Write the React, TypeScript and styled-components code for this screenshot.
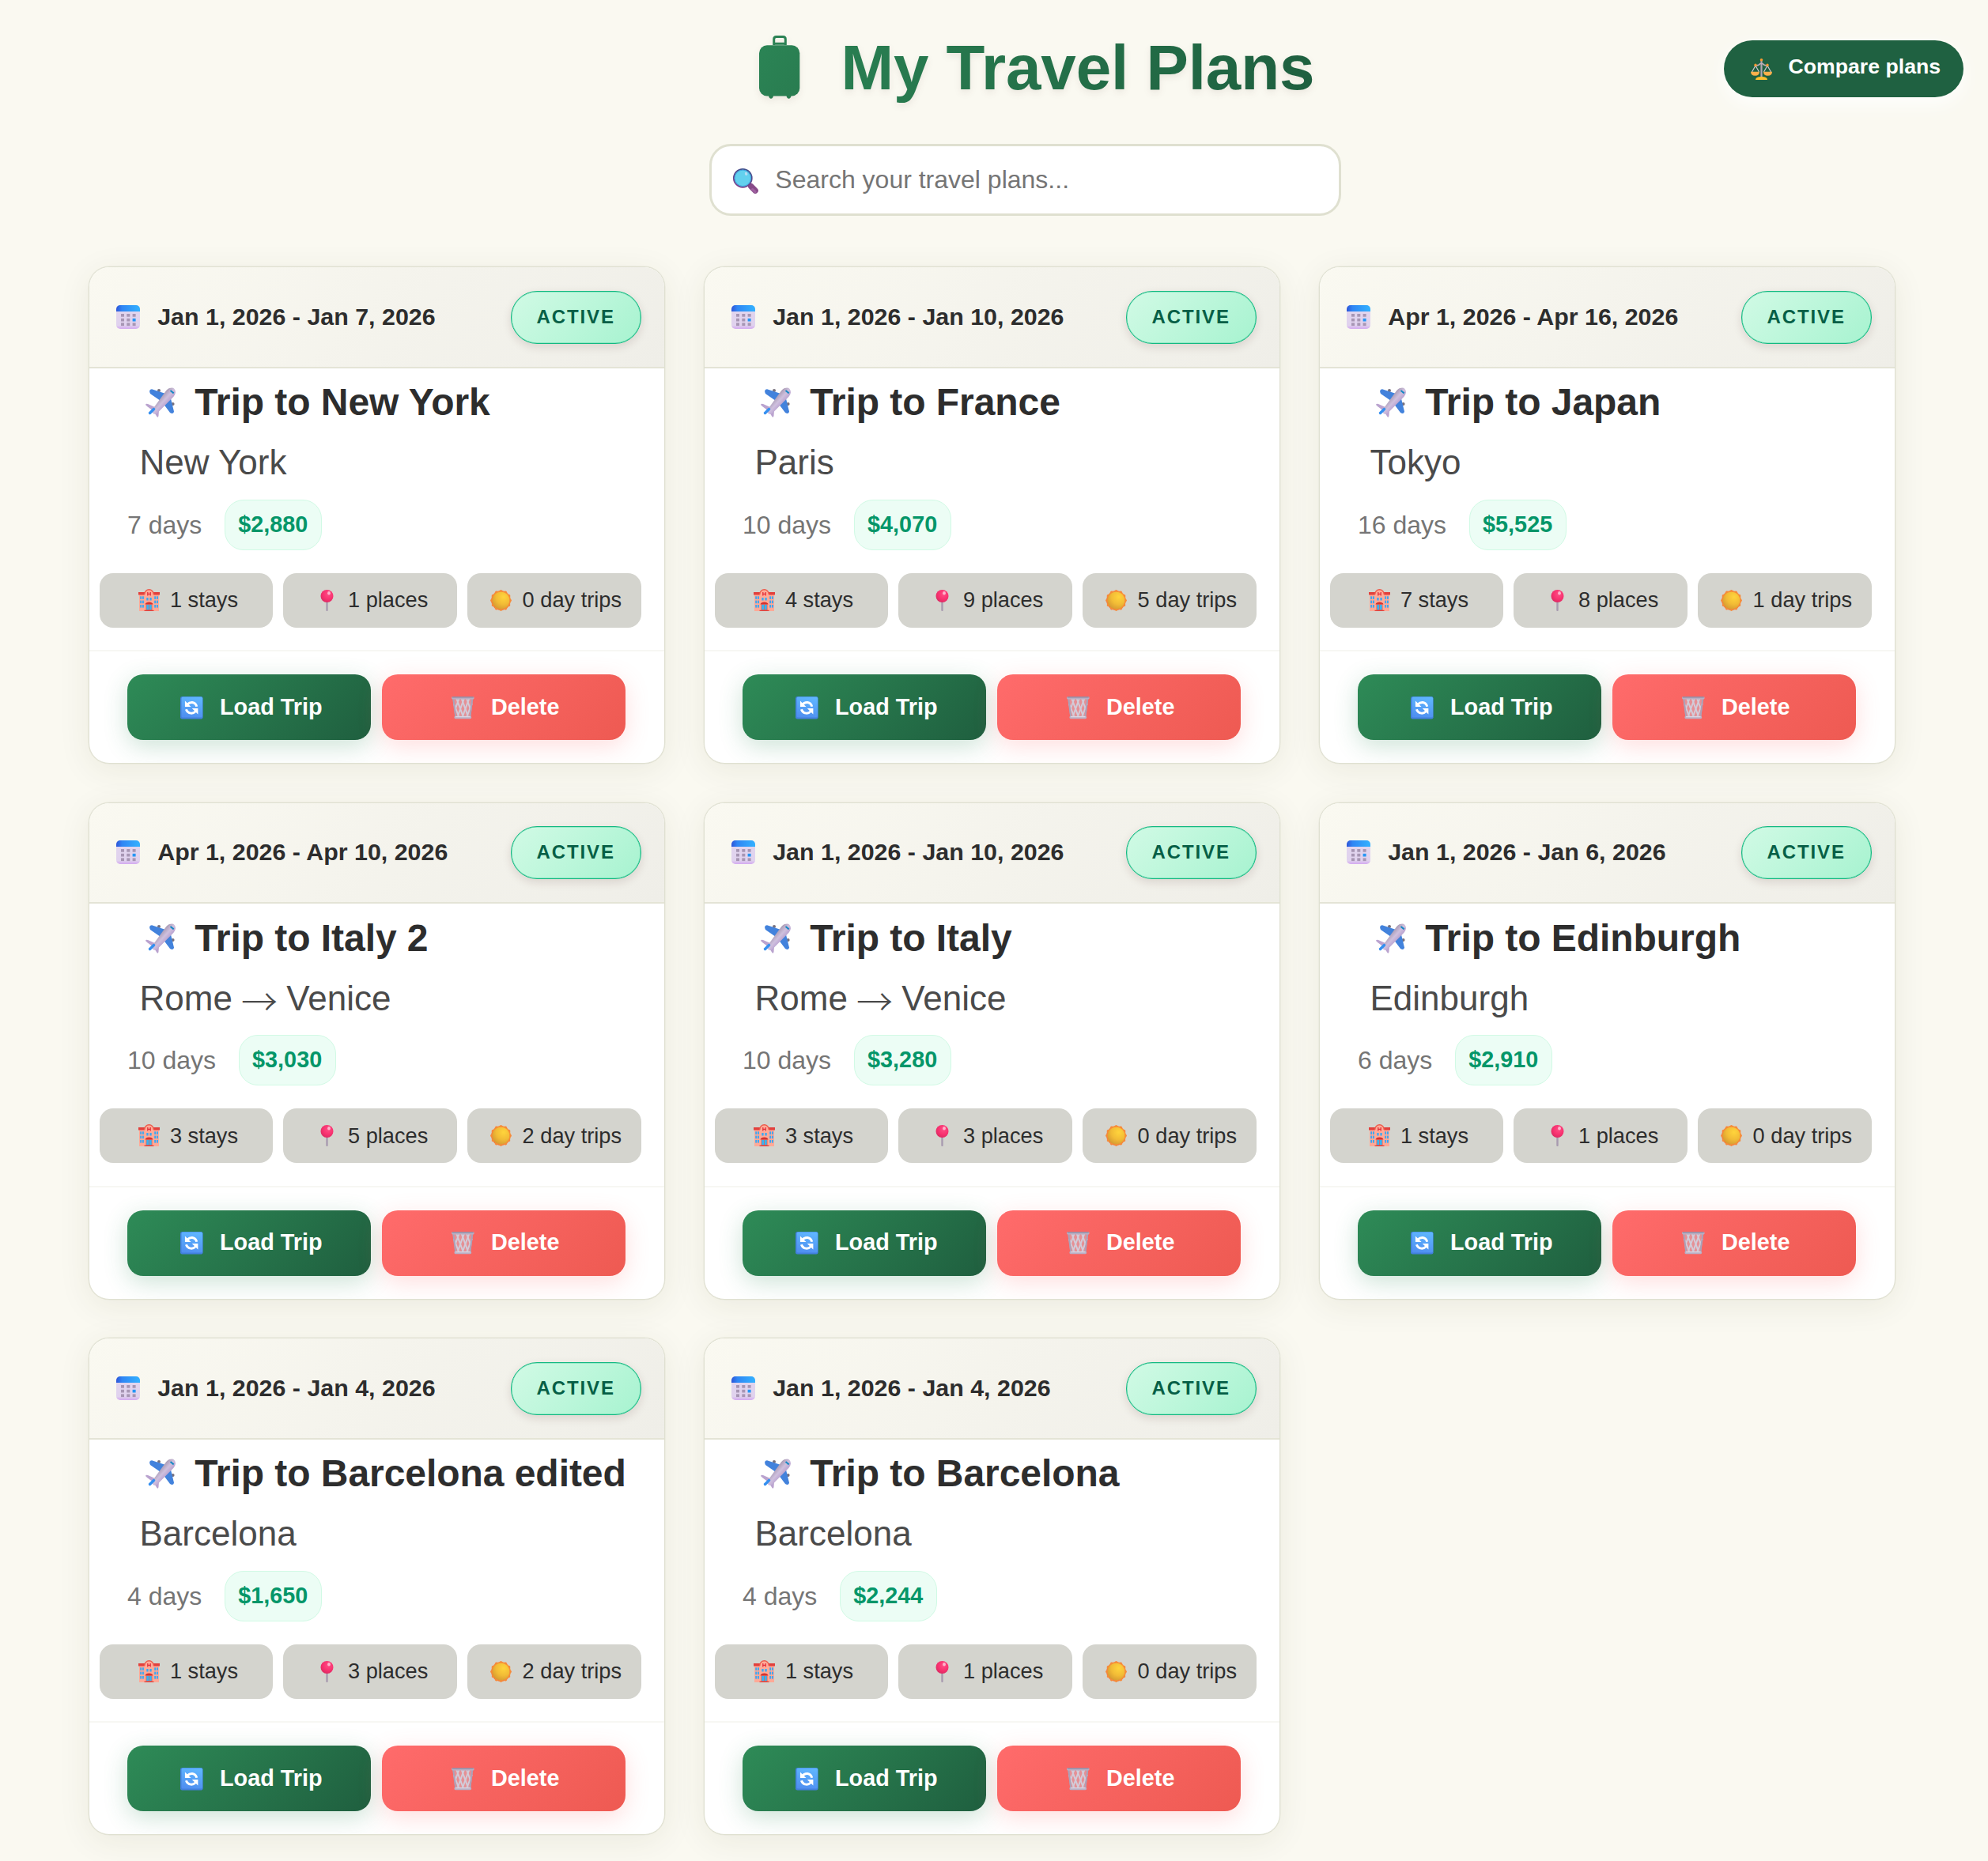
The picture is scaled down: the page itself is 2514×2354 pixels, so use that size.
import React from "react";
import styled, { createGlobalStyle } from "styled-components";

const GlobalStyle = createGlobalStyle`
  * { box-sizing: border-box; }
  body {
    margin: 0;
    background: #faf9f1;
    font-family: Arial, "Liberation Sans", sans-serif;
    color: #2d2d2d;
  }
  h1, h2, p { margin: 0; }
  button, input { font-family: inherit; }
`;

const Page = styled.div`
  min-height: 2354px;
  padding-bottom: 34px;
`;

const Header = styled.header`
  display: grid;
  grid-template-columns: 931px auto 1fr;
  align-items: center;
  height: 131px;
  padding: 39px 31px 0 0;
`;

const PageTitle = styled.h1`
  display: flex;
  align-items: center;
  grid-column: 2;
  gap: 23.5px;
  height: 92px;
  font-size: 80px;
  line-height: 92px;
  letter-spacing: -0.1px;
  white-space: nowrap;
  filter: drop-shadow(0 4px 4px rgba(60, 30, 20, 0.08));
`;

const TitleText = styled.span`
  padding-top: 1px;
  background: linear-gradient(100deg, #297e51 0%, #1e5f3f 100%);
  background-clip: text;
  -webkit-background-clip: text;
  color: transparent;
`;

const CompareButton = styled.button`
  display: flex;
  align-items: center;
  justify-self: end;
  gap: 16px;
  height: 72px;
  width: 303px;
  margin-top: 4px;
  padding: 0 0 0 29px;
  border: 0;
  border-radius: 36px;
  background: #1f6141;
  color: #fff;
  font-size: 26.67px;
  font-weight: 700;
  line-height: 32px;
  white-space: nowrap;
  box-shadow: 0 8px 24px rgba(255, 255, 255, 0.9);

  span { margin-top: -6px; }
`;

const SearchArea = styled.div`
  display: flex;
  justify-content: center;
  padding: 51px 0 64px 79px;
`;

const SearchBox = styled.label`
  display: flex;
  align-items: center;
  gap: 15.5px;
  width: 799px;
  height: 91px;
  padding-left: 21px;
  border: 3px solid #dfe0d0;
  border-radius: 27px;
  background: #fff;
`;

const SearchInput = styled.input`
  flex: 1;
  min-width: 0;
  height: 60px;
  padding: 0;
  border: 0;
  outline: 0;
  background: transparent;
  font-size: 32px;

  &::placeholder { color: #757575; opacity: 1; }
`;

const CardGrid = styled.main`
  display: grid;
  grid-template-columns: repeat(3, 1fr);
  gap: 48.5px 49px;
  padding: 0 117px 0 112px;
`;

const Card = styled.article`
  display: flex;
  flex-direction: column;
  height: 629px;
  overflow: hidden;
  border: 1px solid #dfe0d1;
  border-radius: 26px;
  background: #fff;
  box-shadow: 0 0 0 0.5px rgba(223, 224, 209, 0.6), 0 8px 40px rgba(70, 70, 30, 0.08);
`;

const CardHeader = styled.div`
  display: flex;
  align-items: center;
  flex: none;
  height: 127.5px;
  padding: 0 29.5px 0 28px;
  border-bottom: 2px solid #e4e4d6;
  background: linear-gradient(135deg, #faf9f1 0%, #efeee8 100%);
`;

const Dates = styled.div`
  display: flex;
  align-items: center;
  gap: 16.6px;
  flex: 1;
  font-size: 30.4px;
  font-weight: 700;
  line-height: 34px;
  white-space: nowrap;

  span { margin-top: -2px; }
`;

const Status = styled.span`
  width: 165px;
  height: 67px;
  margin-top: 1px;
  padding-left: 32px;
  border: 1px solid #12b981;
  border-radius: 33px;
  background: linear-gradient(135deg, #d1fae5 0%, #a7f3d0 100%);
  color: #065f46;
  font-size: 24px;
  font-weight: 700;
  letter-spacing: 1.9px;
  line-height: 64px;
  box-shadow: inset 0 0 0 0.5px rgba(18, 185, 129, 0.5), 0 4px 12px rgba(60, 20, 20, 0.13);
`;

const TripTitle = styled.h2`
  display: flex;
  align-items: center;
  gap: 16.6px;
  height: 56px;
  margin: 15.5px 0 0 64px;
  font-size: 48px;
  line-height: 56px;
  letter-spacing: -0.05px;
  white-space: nowrap;
`;

const Route = styled.p`
  height: 56px;
  margin: 20px 0 0 63.5px;
  color: #4a4a4a;
  font-size: 44px;
  line-height: 56px;
  white-space: nowrap;
`;

const Arrow = styled.span`
  display: inline-block;
  width: 44px;
  font-family: "Noto Sans CJK JP", sans-serif;
  font-size: 46px;
  font-weight: 300;
  line-height: 0;
  text-indent: -1px;
  vertical-align: -6px;
`;

const Meta = styled.div`
  display: flex;
  align-items: center;
  gap: 28.5px;
  height: 64px;
  margin: 18.5px 0 29px 48px;
`;

const Duration = styled.span`
  color: #757575;
  font-size: 32px;
  line-height: 36px;
`;

const Price = styled.span`
  height: 64px;
  padding: 0 16.5px;
  border: 1.5px solid #d1fae5;
  border-radius: 24px;
  background: #ecfdf5;
  color: #059669;
  font-size: 28.8px;
  font-weight: 700;
  line-height: 61px;
`;

const Stats = styled.div`
  display: grid;
  grid-template-columns: repeat(3, 1fr);
  gap: 13px;
  margin: 0 29.5px 28.5px 12.5px;
`;

const Stat = styled.div`
  display: flex;
  align-items: center;
  justify-content: center;
  gap: 8px;
  height: 69px;
  border-radius: 17px;
  background: #d4d4ce;
  font-size: 27.2px;
  line-height: 32px;
  white-space: nowrap;
`;

const Actions = styled.div`
  display: grid;
  grid-template-columns: 1fr 1fr;
  gap: 13.5px;
  padding: 29px 49.5px 28px 48px;
  border-top: 2px solid #f7f7f3;
`;

const ActionButton = styled.button<{ $danger?: boolean }>`
  display: flex;
  align-items: center;
  justify-content: center;
  gap: 16px;
  height: 83px;
  padding: 0;
  border: 0;
  border-radius: 20px;
  background: ${(p) =>
    p.$danger
      ? "linear-gradient(135deg, #ff6b6b 0%, #ee5a52 100%)"
      : "linear-gradient(135deg, #2e8b57 0%, #1f5f3f 100%)"};
  box-shadow: 0 8px 30px
    ${(p) => (p.$danger ? "rgba(255, 107, 107, 0.22)" : "rgba(46, 139, 87, 0.24)")};
  color: #fff;
  font-size: 28.8px;
  font-weight: 700;
  line-height: 34px;
  white-space: nowrap;

  span { margin-top: -2px; }
`;

/* Holds a pictogram inside the wide advance an emoji glyph takes. */
const IconSlot = styled.i<{ $width: number; $size: number; $drop?: number }>`
  display: flex;
  align-items: center;
  justify-content: center;
  flex: none;
  width: ${(p) => p.$width}px;
  padding-top: ${(p) => p.$drop ?? 0}px;

  svg {
    display: block;
    width: ${(p) => p.$size}px;
    height: ${(p) => p.$size}px;
    overflow: visible;
  }
`;

const SuitcaseIcon = styled.svg`
  display: block;
  flex: none;
  width: 109px;
  height: 80px;
`;

const Suitcase = () => (
  <SuitcaseIcon viewBox="0 0 109 80">
    <defs>
      <linearGradient id="case" x1="0" y1="0" x2="1" y2="1">
        <stop offset="0" stopColor="#2b8455" />
        <stop offset="1" stopColor="#297c50" />
      </linearGradient>
    </defs>
    <path d="M47.7 12V4.6q0-3 3-3h8.6q3 0 3 3V12M47.7 10.2h14.6" fill="none" stroke="#2b8254" strokeWidth="3" />
    <rect x="29" y="12.3" width="51.3" height="64.2" rx="10" fill="url(#case)" />
    <path d="M41 76h6q-.6 3.8-3 3.8T41 76zM63.5 76h6q-.6 3.8-3 3.8t-3-3.8z" fill="#297c50" />
  </SuitcaseIcon>
);

const Calendar = () => (
  <svg viewBox="0 0 30 30">
    <defs>
      <linearGradient id="calTop" x1="0" y1="0" x2="1" y2="0">
        <stop offset="0" stopColor="#2f55d8" />
        <stop offset=".25" stopColor="#2f86f4" />
        <stop offset="1" stopColor="#33b2ff" />
      </linearGradient>
      <linearGradient id="calBody" x1="0" y1="0" x2="0" y2="1">
        <stop offset="0" stopColor="#e2d6ee" />
        <stop offset=".85" stopColor="#e0d2ee" />
        <stop offset="1" stopColor="#d3a9f0" />
      </linearGradient>
    </defs>
    <rect width="30" height="30" rx="5" fill="url(#calBody)" />
    <path d="M0 8V5a5 5 0 0 1 5-5h20a5 5 0 0 1 5 5v3z" fill="url(#calTop)" />
    <g fill="#a796b4">
      {[11, 16.8, 22.4].map((y) =>
        [6, 13.3, 20.6].map((x) => (
          <rect key={`${x}-${y}`} x={x} y={y} width="4" height="3.7" fill={x > 20 && y > 16 && y < 20 ? "#2596f5" : undefined} />
        ))
      )}
    </g>
  </svg>
);

const Plane = () => (
  <svg viewBox="0 0 38 38">
    <defs>
      <linearGradient id="hull" x1="0.35" y1="0.35" x2="0.65" y2="0.65">
        <stop offset="0" stopColor="#a99bb4" />
        <stop offset=".5" stopColor="#cfc0de" />
        <stop offset="1" stopColor="#b79fce" />
      </linearGradient>
    </defs>
    <circle cx="17" cy="4" r="2" fill="#77717d" />
    <circle cx="34.6" cy="21" r="2" fill="#77717d" />
    <path d="M6 8Q3.500 2.800 8 2.300L27 8.500 19 17z" fill="#4282dc" />
    <path d="M31 32Q35.500 34.500 36 30.500L31 10 22 20z" fill="#4282dc" />
    <path d="M0 22q.5-2 3-1l9 4 2 4 3 0-.5 7q-.5 2.500-2 1.300L10 30l-8-6z" fill="#baa3cf" />
    <path d="M30 1q7.500-2.500 8 5.200-.5 3.500-2.500 5.500L15 32.500q-3.500 2.300-5.700.2t.2-5.700L26 4.200q2-2.300 4-3.200z" fill="url(#hull)" />
    <path d="M5.500 32.500l5-5" stroke="#348ff0" strokeWidth="3.4" strokeLinecap="round" />
    <path d="M31.500 4l4.200 3.400" stroke="#1689c4" strokeWidth="2" />
  </svg>
);

const Hotel = () => (
  <svg viewBox="0 0 27 27">
    <path d="M1 4h25v23H1z" fill="#ffa997" />
    <path d="M0 3h27v3.5H0z" fill="#e2403c" />
    <path d="M7.8 27V5.5a5.7 5.7 0 0 1 11.4 0V27z" fill="#ffab98" />
    <path d="M7.8 6V5.5a5.7 5.7 0 0 1 11.4 0V6" fill="none" stroke="#ed5b4c" strokeWidth="1.4" />
    <path d="M11.8 3v4.5M15.2 3v4.5M11.8 5.3h3.4" stroke="#e2303c" strokeWidth="1.3" />
    <g fill="#38a8f4">
      {[8.3, 13.6, 19].map((y) =>
        [2.2, 5, 20.2, 23].map((x) => <rect key={`${x}-${y}`} x={x} y={y} width="1.9" height="3.6" />)
      )}
      <path d="M10.3 10h2.3v3.5h-2.3zM14.4 10h2.3v3.5h-2.3z" />
    </g>
    <path d="M9.5 18.5h8V26h-8z" fill="#e8604f" />
    <path d="M10.3 18.7h2.8v6.6h-2.8zM13.9 18.7h2.8v6.6h-2.8z" fill="#35b4f5" />
    <path d="M8.5 18.6q.6-3.2 5-3.2t5 3.2z" fill="#d6332f" />
    <path d="M7.5 25.7h12V27h-12z" fill="#e2403c" />
  </svg>
);

const Pin = () => (
  <svg viewBox="0 0 27 27">
    <defs>
      <radialGradient id="pinHead" cx=".6" cy=".35" r=".7">
        <stop offset="0" stopColor="#ff4d85" />
        <stop offset=".6" stopColor="#f7316f" />
        <stop offset="1" stopColor="#d92a61" />
      </radialGradient>
    </defs>
    <rect x="12.3" y="14" width="2.4" height="13" rx="1" fill="#a89bb0" />
    <circle cx="13.5" cy="8" r="8" fill="url(#pinHead)" />
    <ellipse cx="16" cy="4.3" rx="1.9" ry="2.3" fill="#ffb3cb" />
  </svg>
);

const Sun = () => (
  <svg viewBox="0 0 27 27">
    <defs>
      <radialGradient id="sunFace" cx=".65" cy=".3" r=".85">
        <stop offset="0" stopColor="#ffd43c" />
        <stop offset=".5" stopColor="#f2bc36" />
        <stop offset="1" stopColor="#cf9230" />
      </radialGradient>
      <linearGradient id="sunRim" x1="1" y1="0" x2="0" y2="1">
        <stop offset="0" stopColor="#ffa234" />
        <stop offset="1" stopColor="#ec7340" />
      </linearGradient>
    </defs>
    <circle cx="13.5" cy="13.5" r="12.4" fill="url(#sunRim)" />
    <g fill="#f68a3a">
      {Array.from({ length: 12 }, (_, i) => (
        <path key={i} d="M10.7 3q1-3 2.8-3t2.8 3z" transform={`rotate(${i * 30} 13.5 13.5)`} />
      ))}
    </g>
    <circle cx="13.5" cy="13.5" r="10.8" fill="url(#sunFace)" />
  </svg>
);

const Refresh = () => (
  <svg viewBox="0 0 29 29">
    <defs>
      <linearGradient id="tile" x1="0.6" y1="0" x2="0.4" y2="1">
        <stop offset="0" stopColor="#5fb6ff" />
        <stop offset="1" stopColor="#4f8ff0" />
      </linearGradient>
    </defs>
    <rect width="29" height="29" rx="2.5" fill="#427fdd" />
    <rect x="1.5" y=".5" width="27" height="26.5" rx="2" fill="url(#tile)" />
    <g fill="none" stroke="#fff" strokeWidth="3">
      <path d="M9 10.2q3-3 6.5-2.6 4.5.5 5.5 5.4" />
      <path d="M20 18.8q-3 3-6.5 2.6-4.5-.5-6-4.9" />
    </g>
    <path d="M6 5.7v7.6h7.7zM22.7 22.7v-7.4H15z" fill="#fff" />
  </svg>
);

const Trash = () => (
  <svg viewBox="0 0 29 29">
    <path d="M1.5 3h26l-3 24h-20z" fill="#cdc6d4" fillOpacity=".45" />
    <g fill="none" stroke="#d2ccd9" strokeWidth="2">
      <path d="M2.800 9L9.500 26M6.500 3l8.500 23M13 3l8 22M19.500 3l5 14" />
      <path d="M26.200 9L19.500 26M22.500 3L14 26M16 3L8 25M9.500 3l-5 14" />
      <path d="M2.300 3l3 23M26.700 3l-3 23" stroke="#aaa1b8" />
    </g>
    <rect x="0" y=".3" width="29" height="3.2" rx="1.5" fill="#b8afc3" />
    <rect x=".8" y=".3" width="27.4" height="1.3" rx=".6" fill="#8e859e" />
    <rect x="3.5" y="25" width="22" height="3.7" rx="1.5" fill="#b9b0c5" />
    <rect x="5" y="25.4" width="19" height="1.2" rx=".6" fill="#dcd6e2" />
  </svg>
);

const Scales = () => (
  <svg viewBox="0 0 27 27">
    <path d="M13.5 3v21" stroke="#b3a6b2" strokeWidth="2.2" />
    <path d="M5 8.5q4.5 1.2 7-2h3q2.5 3.2 7 2" fill="none" stroke="#bfaeba" strokeWidth="1.7" />
    <path d="M6 9L1.5 17M6 9l4.500 8M21 9l-4.500 8M21 9l4.500 8" fill="none" stroke="#d2c7d4" strokeWidth="1.2" />
    <g fill="#fdb04b">
      <path d="M0 16.8h11q0 5-5.5 5T0 16.8zM16 16.800h11q0 5-5.500 5t-5.500-5z" />
      <path d="M6 27q0-4 7.500-4t7.500 4z" fill="#fbc02f" />
      <circle cx="6" cy="8.3" r="1.7" fill="#f99a32" />
      <circle cx="21" cy="8.3" r="1.7" fill="#f99a32" />
      <circle cx="13.5" cy="1.8" r="1.8" fill="#f99a32" />
    </g>
  </svg>
);

const Magnifier = () => (
  <svg viewBox="0 0 32 32">
    <defs>
      <linearGradient id="ring" x1="0.7" y1="0" x2="0.3" y2="1">
        <stop offset="0" stopColor="#3f4f8c" />
        <stop offset="1" stopColor="#7d3f8c" />
      </linearGradient>
    </defs>
    <path d="M22.7 22.7l5.4 5.4" stroke="#874a88" strokeWidth="7.4" strokeLinecap="round" />
    <path d="M24.5 26.5l3.5 3" stroke="#9f60a0" strokeWidth="3" strokeLinecap="round" />
    <circle cx="12.3" cy="12.3" r="11.5" fill="#62d0ee" stroke="url(#ring)" strokeWidth="1.7" />
    <circle cx="12.3" cy="12.3" r="10.2" fill="none" stroke="#3da2dc" strokeWidth="1" />
    <ellipse cx="16.6" cy="6.8" rx="1.7" ry="2.2" fill="#b4dcf3" transform="rotate(-20 16.6 6.8)" />
  </svg>
);

interface Trip {
  dates: string;
  name: string;
  stops: string[];
  days: number;
  price: string;
  stays: number;
  places: number;
  dayTrips: number;
}

const trips: Trip[] = [
  { dates: "Jan 1, 2026 - Jan 7, 2026", name: "Trip to New York", stops: ["New York"], days: 7, price: "$2,880", stays: 1, places: 1, dayTrips: 0 },
  { dates: "Jan 1, 2026 - Jan 10, 2026", name: "Trip to France", stops: ["Paris"], days: 10, price: "$4,070", stays: 4, places: 9, dayTrips: 5 },
  { dates: "Apr 1, 2026 - Apr 16, 2026", name: "Trip to Japan", stops: ["Tokyo"], days: 16, price: "$5,525", stays: 7, places: 8, dayTrips: 1 },
  { dates: "Apr 1, 2026 - Apr 10, 2026", name: "Trip to Italy 2", stops: ["Rome", "Venice"], days: 10, price: "$3,030", stays: 3, places: 5, dayTrips: 2 },
  { dates: "Jan 1, 2026 - Jan 10, 2026", name: "Trip to Italy", stops: ["Rome", "Venice"], days: 10, price: "$3,280", stays: 3, places: 3, dayTrips: 0 },
  { dates: "Jan 1, 2026 - Jan 6, 2026", name: "Trip to Edinburgh", stops: ["Edinburgh"], days: 6, price: "$2,910", stays: 1, places: 1, dayTrips: 0 },
  { dates: "Jan 1, 2026 - Jan 4, 2026", name: "Trip to Barcelona edited", stops: ["Barcelona"], days: 4, price: "$1,650", stays: 1, places: 3, dayTrips: 2 },
  { dates: "Jan 1, 2026 - Jan 4, 2026", name: "Trip to Barcelona", stops: ["Barcelona"], days: 4, price: "$2,244", stays: 1, places: 1, dayTrips: 0 },
];

const TripCard = ({ trip }: { trip: Trip }) => (
  <Card>
    <CardHeader>
      <Dates>
        <IconSlot $width={41.6} $size={30}><Calendar /></IconSlot>
        <span>{trip.dates}</span>
      </Dates>
      <Status>ACTIVE</Status>
    </CardHeader>
    <TripTitle>
      <IconSlot $width={52.6} $size={38}><Plane /></IconSlot>
      {trip.name}
    </TripTitle>
    <Route>
      {trip.stops.map((stop, i) => (
        <React.Fragment key={stop}>
          {i > 0 && <> <Arrow>→</Arrow> </>}
          {stop}
        </React.Fragment>
      ))}
    </Route>
    <Meta>
      <Duration>{trip.days} days</Duration>
      <Price>{trip.price}</Price>
    </Meta>
    <Stats>
      <Stat>
        <IconSlot $width={37.3} $size={27}><Hotel /></IconSlot>
        {trip.stays} stays
      </Stat>
      <Stat>
        <IconSlot $width={37.3} $size={27}><Pin /></IconSlot>
        {trip.places} places
      </Stat>
      <Stat>
        <IconSlot $width={37.3} $size={27}><Sun /></IconSlot>
        {trip.dayTrips} day trips
      </Stat>
    </Stats>
    <Actions>
      <ActionButton>
        <IconSlot $width={39.5} $size={28.6} $drop={1}><Refresh /></IconSlot>
        <span>Load Trip</span>
      </ActionButton>
      <ActionButton $danger>
        <IconSlot $width={39.5} $size={28.6} $drop={1}><Trash /></IconSlot>
        <span>Delete</span>
      </ActionButton>
    </Actions>
  </Card>
);

export default function App() {
  return (
    <>
      <GlobalStyle />
      <Page>
        <Header>
          <PageTitle>
            <Suitcase />
            <TitleText>My Travel Plans</TitleText>
          </PageTitle>
          <CompareButton>
            <IconSlot $width={36.5} $size={27}><Scales /></IconSlot>
            <span>Compare plans</span>
          </CompareButton>
        </Header>
        <SearchArea>
          <SearchBox>
            <IconSlot $width={43.8} $size={32} $drop={2}><Magnifier /></IconSlot>
            <SearchInput placeholder="Search your travel plans..." />
          </SearchBox>
        </SearchArea>
        <CardGrid>
          {trips.map((trip) => (
            <TripCard key={trip.name} trip={trip} />
          ))}
        </CardGrid>
      </Page>
    </>
  );
}
